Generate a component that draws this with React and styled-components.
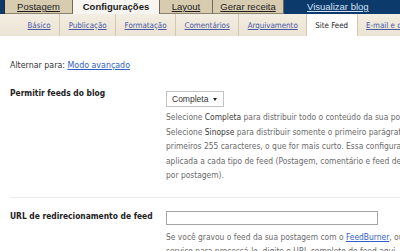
import React from "react";
import styled, { createGlobalStyle } from "styled-components";

const Global = createGlobalStyle`
  html, body { margin: 0; padding: 0; background: #fff; }
  body {
    width: 400px;
    height: 251px;
    overflow: hidden;
    font-family: "DejaVu Sans Condensed", "DejaVu Sans", Verdana, sans-serif;
  }
`;

const mainTabs = [
  { label: "Postagem", w: 68 },
  { label: "Configurações", w: 87, active: true },
  { label: "Layout", w: 53 },
  { label: "Gerar receita", w: 71 },
];

const subTabs = [
  "Básico",
  "Publicação",
  "Formatação",
  "Comentários",
  "Arquivamento",
  "Site Feed",
  "E-mail e celular",
];

export default function App() {
  return (
    <Page>
      <Global />
      <TopBar>
        <Spacer />
        {mainTabs.map((t) => (
          <MainTab key={t.label} $active={t.active} $w={t.w}>
            {t.label}
          </MainTab>
        ))}
        <ViewBlog>Visualizar blog</ViewBlog>
      </TopBar>

      <SubBar>
        {subTabs.map((s) => (
          <SubTab key={s} $active={s === "Site Feed"}>
            {s}
          </SubTab>
        ))}
      </SubBar>

      <Content>
        <Switch>
          Alternar para: <Link>Modo avançado</Link>
        </Switch>

        <Setting>
          <Label $top={4}>Permitir feeds do blog</Label>
          <Field>
            <Select>
              Completa <Caret />
            </Select>
            <Help $gap={3}>
              Selecione <b>Completa</b> para distribuir todo o conteúdo da sua postagem.
              <br />
              Selecione <b>Sinopse</b> para distribuir somente o primeiro parágrafo ou os
              <br />
              primeiros 255 caracteres, o que for mais curto. Essa configuração será
              <br />
              aplicada a cada tipo de feed (Postagem, comentário e feed de comentários
              <br />
              por postagem).
            </Help>
          </Field>
        </Setting>

        <Rule />

        <Setting>
          <Label $top={0}>URL de redirecionamento de feed</Label>
          <Field>
            <TextInput type="text" />
            <Help $gap={5}>
              Se você gravou o feed da sua postagem com o <Link>FeedBurner</Link>, ou outro
              <br />
              serviço para processá-lo, digite o URL completo do feed aqui.
            </Help>
          </Field>
        </Setting>
      </Content>
    </Page>
  );
}

/* ========== styles ========== */

const Page = styled.div`
  width: 400px;
  color: #333;
`;

const TopBar = styled.div`
  display: flex;
  height: 14px;
  background: #0b3a6b;
  white-space: nowrap;
  font-family: "Liberation Sans", Arial, sans-serif;
`;

const Spacer = styled.div`
  width: 5px;
  flex: none;
  border-right: 1px solid #2a2a2a;
  box-sizing: border-box;
`;

const MainTab = styled.div`
  flex: none;
  width: ${(p) => p.$w}px;
  height: 14px;
  line-height: 13px;
  font-size: 9.5px;
  text-align: center;
  background: ${(p) => (p.$active ? "#f7f5ef" : "#d7ccb0")};
  color: #1c1c1c;
  font-weight: ${(p) => (p.$active ? "bold" : "normal")};
  text-decoration: ${(p) => (p.$active ? "none" : "underline")};
  border-right: 1px solid #6f6756;
  border-bottom: ${(p) => (p.$active ? "none" : "1px solid #8d836e")};
  box-sizing: border-box;
`;

const ViewBlog = styled.div`
  flex: 1;
  padding-left: 23px;
  line-height: 13px;
  font-size: 9.5px;
  color: #d6e2f3;
  text-decoration: underline;
`;

const SubBar = styled.div`
  display: flex;
  align-items: stretch;
  height: 22px;
  padding-left: 19px;
  background: linear-gradient(#f3eee3, #ebe3d2);
  white-space: nowrap;
  overflow: hidden;
`;

const SubTab = styled.div`
  flex: none;
  display: flex;
  align-items: center;
  padding: 0 8.5px;
  font-size: 7.9px;
  color: ${(p) => (p.$active ? "#1f1f1f" : "#4759a6")};
  text-decoration: ${(p) => (p.$active ? "none" : "underline")};
  background: ${(p) => (p.$active ? "#fff" : "transparent")};
  border-right: 1px solid #d5c7ab;
  border-left: ${(p) => (p.$active ? "1px solid #d5c7ab" : "none")};
  margin-left: ${(p) => (p.$active ? "-1px" : "0")};
  padding-left: ${(p) => (p.$active ? "8px" : "8.5px")};
`;

const Content = styled.div`
  padding: 24px 0 0 10px;
`;

const Switch = styled.div`
  font-size: 8.8px;
  color: #333;
  margin-bottom: 14px;
`;

const Link = styled.span`
  color: #2f5ec4;
  text-decoration: underline;
`;

const Setting = styled.div`
  display: flex;
  align-items: flex-start;
`;

const Label = styled.div`
  width: 156px;
  flex: none;
  font-weight: bold;
  font-size: 8.4px;
  color: #222;
  padding-top: ${(p) => p.$top}px;
`;

const Field = styled.div`
  flex: 1;
  white-space: nowrap;
`;

const Select = styled.div`
  display: inline-flex;
  align-items: center;
  gap: 5px;
  height: 16px;
  margin-top: 7px;
  padding: 0 6px 0 5px;
  border: 1px solid #c3c3c3;
  font-family: "Liberation Sans", Arial, sans-serif;
  font-size: 8.5px;
  color: #333;
  box-sizing: border-box;
`;

const Caret = styled.span`
  width: 0;
  height: 0;
  border-left: 2.5px solid transparent;
  border-right: 2.5px solid transparent;
  border-top: 3px solid #222;
  margin-top: 1px;
`;

const Help = styled.p`
  margin: ${(p) => p.$gap}px 0 0;
  font-size: 8.4px;
  line-height: 14.5px;
  color: #6a6a6a;
  b {
    color: #3a3a3a;
    font-weight: normal;
  }
`;

const Rule = styled.div`
  height: 1px;
  background: #ececec;
  margin: 14px 0 13px;
`;

const TextInput = styled.input`
  display: block;
  width: 212px;
  height: 14px;
  box-sizing: border-box;
  border: 1px solid #a5a5a5;
  margin: 0;
  padding: 0;
`;
